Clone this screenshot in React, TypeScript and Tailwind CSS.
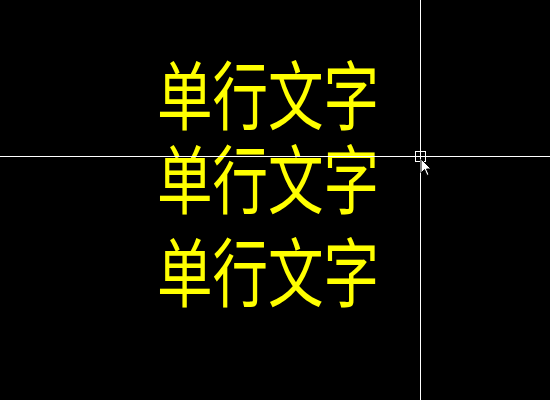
export default function App() {
  const font = { fontFamily: '"Noto Sans CJK SC", sans-serif' };
  const cls = "text-[#ffff00] text-[75px] leading-[75px] font-normal origin-left scale-x-[0.74] whitespace-nowrap";
  return (
    <div className="relative w-[550px] h-[400px] bg-black overflow-hidden">
      <div className="flex flex-col items-start pl-[157px] pt-[54px]" style={font}>
        <div className={cls}>单行文字</div>
        <div className={cls + " mt-[9px]"}>单行文字</div>
        <div className={cls + " mt-[18px]"}>单行文字</div>
      </div>
      <div className="absolute left-0 right-0 top-[156px] h-px bg-white" />
      <div className="absolute top-0 bottom-0 left-[420px] w-px bg-white" />
      <div className="absolute left-[415px] top-[151px] w-[11px] h-[11px] border border-white" />
      <svg className="absolute left-[420px] top-[158px]" width="14" height="20" viewBox="0 0 14 20">
        <path d="M1 1 L1 15 L4.5 11.5 L7 17.5 L9 16.5 L6.5 11 L11 11 Z" fill="white" stroke="black" strokeWidth="1" />
      </svg>
    </div>
  );
}
